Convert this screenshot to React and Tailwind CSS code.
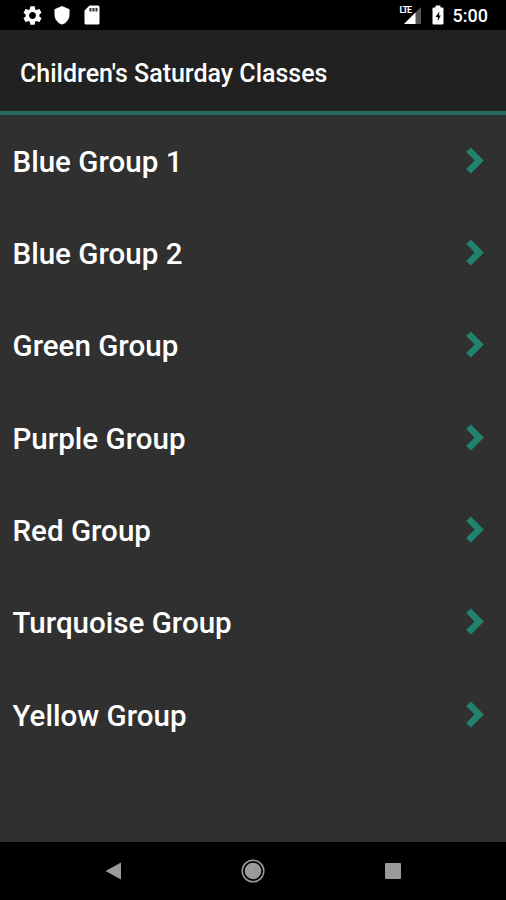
import { MdSettings } from 'react-icons/md'

const groups = [
    'Blue Group 1',
    'Blue Group 2',
    'Green Group',
    'Purple Group',
    'Red Group',
    'Turquoise Group',
    'Yellow Group',
]

function StatusBar() {
    return (
        <div className="flex h-[30px] shrink-0 items-center justify-between bg-black pl-[21px] pr-[18px] text-white">
            <div className="flex items-center">
                <MdSettings className="h-[23px] w-[23px]" />
                <svg viewBox="0 0 16 19" className="ml-[10px] h-[19px] w-[16px]" fill="currentColor">
                    <path d="M8 0 15.5 3.3V8.5C15.5 13.2 12.3 17.4 8 18.5 3.7 17.4.5 13.2.5 8.5V3.3z" />
                </svg>
                {/* SD card */}
                <svg viewBox="0 0 16 20" className="ml-[14px] h-[20px] w-[16px]">
                    <path d="M5.5.5H14A1.5 1.5 0 0 1 15.5 2V18A1.5 1.5 0 0 1 14 19.5H2A1.5 1.5 0 0 1 .5 18V5.5z" fill="#fff" />
                    <path d="M5.5 3h2v3.5h-2zM8.5 3h2v3.5h-2zM11.5 3h2v3.5h-2z" fill="#333" />
                </svg>
            </div>
            <div className="flex items-center">
                <div className="relative h-[20px] w-[22px]">
                    <svg viewBox="0 0 22 20" className="h-[20px] w-[22px]">
                        <path d="M22 2V19H5z" fill="#555" />
                        <path d="M16.5 7.5V19H5z" fill="#fff" />
                    </svg>
                    <span className="absolute left-px top-[1px] text-[9px] font-bold leading-[9px] tracking-[-1px]">LTE</span>
                </div>
                <svg viewBox="0 0 12 20" className="ml-[11px] h-[20px] w-[12px]">
                    <path d="M3.5.5h5v2h2a1 1 0 0 1 1 1v15a1 1 0 0 1-1 1h-9a1 1 0 0 1-1-1v-15a1 1 0 0 1 1-1h2z" fill="#fff" />
                    <path d="M7.5 6.5 3.5 12h2.3v4l3-5.4H6.900z" fill="#000" />
                </svg>
                <span className="ml-[9px] mt-[2px] text-[18px] font-medium leading-none">5:00</span>
            </div>
        </div>
    )
}

function GroupRow({ name }) {
    return (
        <li className="flex h-[92.36px] items-center justify-between pl-[12.5px] pr-[22px]">
            <span className="pt-[2.5px] text-[29.55px] font-medium leading-none">{name}</span>
            <svg viewBox="0 0 18 27" className="mb-[2px] h-[27px] w-[18px]" fill="none">
                <path d="M2.5 2.7 13.2 13.5 2.5 24.3" stroke="#21836f" strokeWidth="6.6" />
            </svg>
        </li>
    )
}

export default function App() {
    return (
        <div className="flex h-[900px] w-[506px] flex-col overflow-hidden bg-[#303030] font-['Roboto',sans-serif] text-white">
            <StatusBar />

            <header className="flex h-[85px] shrink-0 items-center border-b-[4px] border-[#276b5e] bg-[#212121] pl-[20px]">
                <h1 className="pt-[5px] text-[25px] font-medium leading-none">Children's Saturday Classes</h1>
            </header>

            <ul className="flex-1">
                {groups.map((name) => (
                    <GroupRow key={name} name={name} />
                ))}
            </ul>

            {/* Navigation buttons */}
            <nav className="flex h-[58px] shrink-0 items-center justify-between bg-black pl-[104px] pr-[105px]">
                <svg viewBox="0 0 18 18" className="h-[18px] w-[18px]">
                    <path d="M17 .5v17L1.500 9z" fill="#9a9a9a" />
                </svg>
                <svg viewBox="0 0 24 24" className="mr-px h-[24px] w-[24px]">
                    <circle cx="12" cy="12" r="8.3" fill="#9a9a9a" />
                    <circle cx="12" cy="12" r="10.8" fill="none" stroke="#9a9a9a" strokeWidth="1.5" />
                </svg>
                <div className="h-[16px] w-[16px] rounded-[1px] bg-[#9a9a9a]"></div>
            </nav>
        </div>
    )
}
